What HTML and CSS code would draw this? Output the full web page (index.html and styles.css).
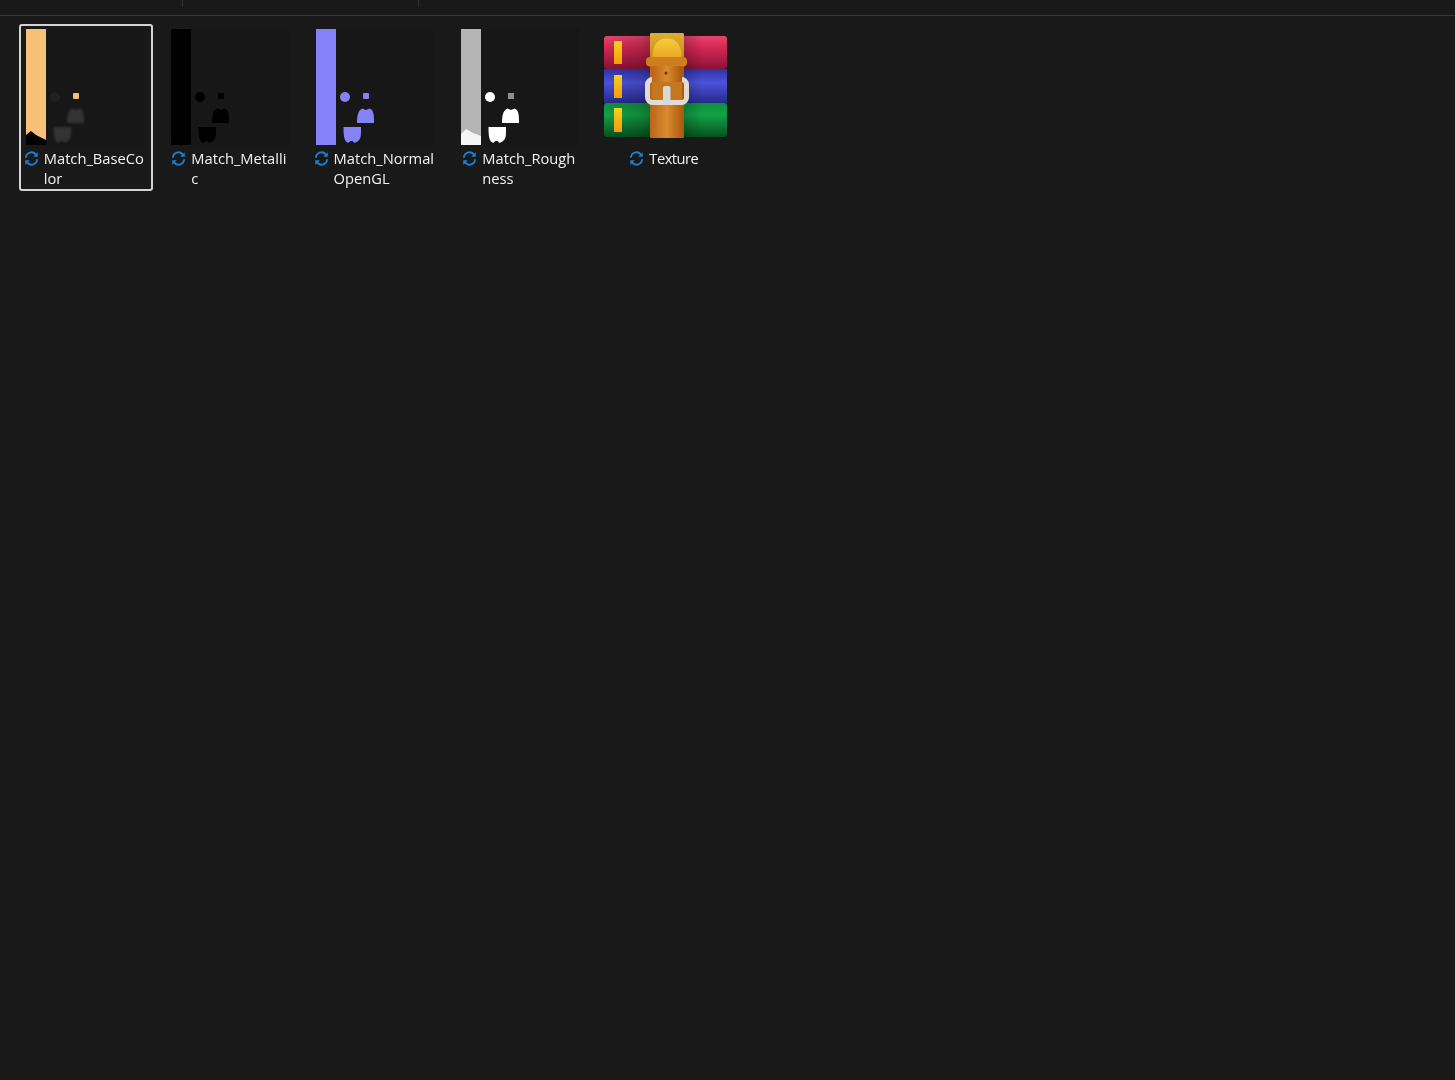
FILE: index.html
```html
<!DOCTYPE html>
<html lang="en">
<head>
<meta charset="utf-8">
<title>Texture</title>
<link rel="stylesheet" href="styles.css">
</head>
<body>
<svg class="defs" width="0" height="0" aria-hidden="true">
  <defs>
    <symbol id="sync" viewBox="0 0 16 16">
      <path d="M2 7.2A6 6 0 0 1 12.6 3.6L14 5" fill="none" stroke="#1b80d2" stroke-width="2"/>
      <path d="M14.6 1.2V6.2H9.8Z" fill="#1b80d2"/>
      <path d="M14 8.8A6 6 0 0 1 3.4 12.4L2 11" fill="none" stroke="#1b80d2" stroke-width="2"/>
      <path d="M1.4 14.8V9.8H6.2Z" fill="#1b80d2"/>
    </symbol>
    <symbol id="shapes" viewBox="0 0 118 116">
      <circle cx="29" cy="68" r="5"/>
      <rect x="47" y="64" width="6" height="6" rx="1"/>
      <path d="M41 94C41 88 41.500 84 44 81L46.500 79.500L50 81L53.500 79.500L56 81C58 84 58 88 58 94Z"/>
      <path d="M27.500 98H45V104C45 108 44 111 41.500 112.500L38.500 114L36.500 112L34.500 112L32 114L30 112.500C28 110 27.500 106 27.500 98Z"/>
    </symbol>
    <linearGradient id="red" x1="0" y1="0" x2="0" y2="1">
      <stop offset="0" stop-color="#e8456c"/><stop offset=".35" stop-color="#d32853"/><stop offset="1" stop-color="#8a1239"/>
    </linearGradient>
    <linearGradient id="blue" x1="0" y1="0" x2="0" y2="1">
      <stop offset="0" stop-color="#2e33a6"/><stop offset=".4" stop-color="#4d52dc"/><stop offset="1" stop-color="#262a88"/>
    </linearGradient>
    <linearGradient id="green" x1="0" y1="0" x2="0" y2="1">
      <stop offset="0" stop-color="#0f8f3c"/><stop offset=".35" stop-color="#12a247"/><stop offset="1" stop-color="#07521f"/>
    </linearGradient>
    <linearGradient id="shade" x1="0" y1="0" x2="1" y2="0">
      <stop offset="0" stop-color="#000" stop-opacity="0"/>
      <stop offset=".3" stop-color="#000" stop-opacity=".15"/>
      <stop offset=".4" stop-color="#000" stop-opacity=".3"/>
      <stop offset=".62" stop-color="#000" stop-opacity=".25"/>
      <stop offset=".8" stop-color="#000" stop-opacity="0"/>
    </linearGradient>
    <linearGradient id="tab" x1="0" y1="0" x2="0" y2="1">
      <stop offset="0" stop-color="#f6d21c"/><stop offset="1" stop-color="#f39a12"/>
    </linearGradient>
    <linearGradient id="belt" x1="0" y1="0" x2="1" y2="0">
      <stop offset="0" stop-color="#b9651a"/><stop offset=".5" stop-color="#d98a2b"/><stop offset="1" stop-color="#a9570f"/>
    </linearGradient>
    <linearGradient id="cap" x1="0" y1="0" x2="0" y2="1">
      <stop offset="0" stop-color="#dcb032"/><stop offset="1" stop-color="#c98a1a"/>
    </linearGradient>
    <linearGradient id="dome" x1="0" y1="0" x2="0" y2="1">
      <stop offset="0" stop-color="#f4cd3c"/><stop offset="1" stop-color="#eba824"/>
    </linearGradient>
  </defs>
</svg>

<header class="topbar">
  <div class="col col-name"></div>
  <div class="col col-date"></div>
</header>

<main class="files">
  <article class="file selected">
    <svg class="thumb tone-base" viewBox="0 0 118 116">
      <rect class="bar" width="20" height="116"/>
      <path class="corner-dark" d="M0 116V106L5 102L10 106L20 111V116Z"/>
      <circle class="faint" cx="29" cy="68" r="5"/>
      <rect class="spot" x="47" y="64" width="6" height="6" rx="1"/>
      <path class="soft" d="M41 94C41 88 41.500 84 44 81L46.500 79.500L50 81L53.500 79.500L56 81C58 84 58 88 58 94Z"/>
      <path class="soft" d="M27.500 98H45V104C45 108 44 111 41.500 112.500L38.500 114L36.500 112L34.500 112L32 114L30 112.500C28 110 27.500 106 27.500 98Z"/>
    </svg>
    <div class="caption">
      <svg class="sync"><use href="#sync"/></svg>
      <span class="label">Match_BaseCo<br>lor</span>
    </div>
  </article>

  <article class="file">
    <svg class="thumb tone-metal" viewBox="0 0 118 116">
      <rect class="bar" width="20" height="116"/>
      <use href="#shapes" width="118" height="116"/>
    </svg>
    <div class="caption">
      <svg class="sync"><use href="#sync"/></svg>
      <span class="label">Match_Metalli<br>c</span>
    </div>
  </article>

  <article class="file">
    <svg class="thumb tone-normal" viewBox="0 0 118 116">
      <rect class="bar" width="20" height="116"/>
      <use href="#shapes" width="118" height="116"/>
    </svg>
    <div class="caption">
      <svg class="sync"><use href="#sync"/></svg>
      <span class="label">Match_Normal<br>OpenGL</span>
    </div>
  </article>

  <article class="file">
    <svg class="thumb tone-rough" viewBox="0 0 118 116">
      <rect class="bar" width="20" height="116"/>
      <path class="corner-light" d="M0 116V105L5 100L12 104L20 107V116Z"/>
      <use href="#shapes" width="118" height="116"/>
      <rect class="dim" x="47" y="64" width="6" height="6" rx="1"/>
    </svg>
    <div class="caption">
      <svg class="sync"><use href="#sync"/></svg>
      <span class="label">Match_Rough<br>ness</span>
    </div>
  </article>

  <article class="file">
    <svg class="thumb rar" viewBox="0 0 134 116">
      <rect x="5" y="7" width="123" height="33" rx="3" fill="url(#red)"/>
      <rect x="5" y="40" width="123" height="34" fill="url(#blue)"/>
      <rect x="5" y="74" width="123" height="34" rx="3" fill="url(#green)"/>
      <rect x="5" y="7" width="123" height="101" rx="3" fill="url(#shade)"/>
      <rect x="15" y="12" width="8" height="23" fill="url(#tab)"/>
      <rect x="15" y="46" width="8" height="23" fill="url(#tab)"/>
      <rect x="15" y="79" width="8" height="24" fill="url(#tab)"/>
      <rect x="51" y="4" width="34" height="105" rx="1" fill="url(#belt)"/>
      <rect x="51" y="4" width="34" height="26" rx="2" fill="url(#cap)"/>
      <path d="M53.500 28C53.500 15 59 9.500 68 9.500C77 9.500 82.500 15 82.500 28Z" fill="url(#dome)"/>
      <rect x="47" y="28" width="41" height="9.500" rx="4" fill="#cc7f1c"/>
      <rect x="48.500" y="50.500" width="39" height="23" rx="5" fill="none" stroke="#e2dbd3" stroke-width="5"/>
      <path d="M53 37H83V53H53Z" fill="url(#belt)"/>
      <rect x="53" y="53" width="30" height="18" fill="#c4771f"/>
      <rect x="64" y="57" width="7.500" height="19" rx="2" fill="#d5dade"/>
      <circle cx="67" cy="44" r="1.500" fill="#6f3606"/>
    </svg>
    <div class="caption">
      <svg class="sync"><use href="#sync"/></svg>
      <span class="label label-tight">Texture</span>
    </div>
  </article>
</main>
</body>
</html>
```

FILE: styles.css
```css
html, body {
  margin: 0;
  height: 100%;
  background: #191919;
}

body {
  font-family: "Open Sans", "Noto Sans", sans-serif;
  overflow: hidden;
}

.defs {
  position: absolute;
}

.topbar {
  display: flex;
  height: 15px;
  border-bottom: 1px solid #3a3a3a;
  box-sizing: content-box;
}

.col {
  height: 7px;
  border-right: 1px solid #2f2f2f;
}

.col-name {
  width: 182px;
}

.col-date {
  width: 235px;
}

.files {
  display: flex;
  align-items: flex-start;
  gap: 11px;
  padding: 8px 0 0 19px;
}

.file {
  width: 134px;
  height: 167px;
  box-sizing: border-box;
  border: 2px solid transparent;
  border-radius: 3px;
  padding: 3px 0 0 5px;
}

.file.selected {
  border-color: #d4d4d4;
}

.thumb {
  display: block;
  width: 118px;
  height: 116px;
  background: #171717;
  filter: blur(0.5px);
}

.thumb.rar {
  width: 134px;
  margin-left: -7px;
  background: none;
  filter: blur(0.7px);
}

.caption {
  display: flex;
  justify-content: center;
  gap: 5px;
  margin: 3px 0 0 -9.2px;
  width: 134px;
}

.sync {
  flex: none;
  width: 15px;
  height: 15px;
  margin-top: 3px;
  filter: blur(0.3px);
}

.label {
  font-size: 14.7px;
  line-height: 20px;
  color: #f2f2f2;
  filter: blur(0.25px);
}

.label-tight {
  letter-spacing: -0.5px;
}

.tone-base .bar { fill: #f6c076; }
.corner-dark { fill: #000; }
.faint { fill: #202020; }
.spot { fill: #f3bd74; }
.soft { fill: #333; filter: blur(1px); }

.tone-metal { fill: #000; }
.tone-metal .bar { fill: #000; }

.tone-normal { fill: #8582f6; }
.tone-normal .bar { fill: #8582f8; }

.tone-rough { fill: #fff; }
.tone-rough .bar { fill: #b5b5b5; }
.corner-light { fill: #f5f5f5; }
.dim { fill: #8c8c8c; }
```
